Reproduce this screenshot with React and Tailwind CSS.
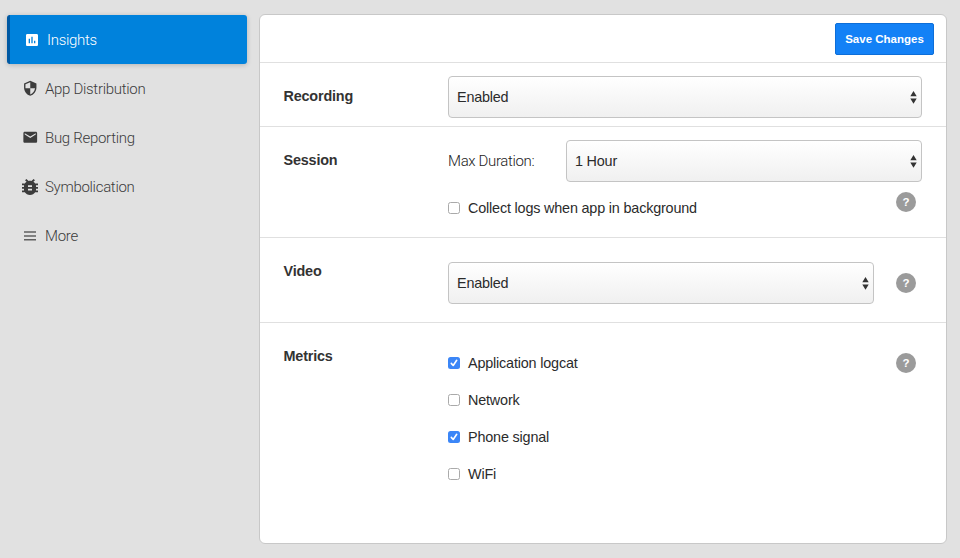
import React from "react";
import { MdInsertChart, MdSecurity, MdEmail } from "react-icons/md";

function BugIcon() {
  return (
    <svg width="16" height="16" viewBox="4 3 16 18" preserveAspectRatio="none" className="shrink-0 fill-current">
      <path d="M20 8h-2.81c-.45-.78-1.07-1.45-1.82-1.96L17 4.41 15.59 3l-2.17 2.17C12.96 5.06 12.49 5 12 5s-.96.06-1.41.17L8.41 3 7 4.41l1.62 1.63C7.88 6.55 7.26 7.22 6.81 8H4v2h2.09c-.05.33-.09.66-.09 1v1H4v2h2v1c0 .34.04.67.09 1H4v2h2.81c1.04 1.79 2.97 3 5.19 3s4.15-1.21 5.19-3H20v-2h-2.09c.05-.33.09-.66.09-1v-1h2v-2h-2v-1c0-.34-.04-.67-.09-1H20V8zm-6 8h-4v-2h4v2zm0-4h-4v-2h4v2z" />
    </svg>
  );
}

function MenuIcon() {
  return (
    <svg width="12" height="10" viewBox="0 0 12 10" className="shrink-0 fill-[#606060]">
      <path d="M0 .3h12v1.5H0zM0 4.2h12v1.5H0zM0 8.1h12v1.5H0z" />
    </svg>
  );
}

const navItems = [
  { label: "App Distribution", icon: <MdSecurity size={16.5} /> },
  { label: "Bug Reporting", icon: <MdEmail size={16.5} /> },
  { label: "Symbolication", icon: <BugIcon /> },
  { label: "More", icon: <MenuIcon /> },
];

function Select({ value, className }) {
  return (
    <div
      className={`flex h-[42px] items-center justify-between rounded-[4px] border border-[#c4c4c4] bg-linear-to-b from-white to-[#f0f0f0] pl-2 pr-1 text-[14.4px] tracking-[-0.2px] text-[#2b2b2b] ${className}`}
    >
      <span className="pt-0.5">{value}</span>
      <svg width="7" height="13" viewBox="0 0 7 13" className="fill-[#333]">
        <path d="M3.5 0 6.7 5.2H.3zM.3 7.6h6.4L3.5 12.8z" />
      </svg>
    </div>
  );
}

function Checkbox({ label, checked }) {
  return (
    <div className="flex h-[17px] items-center gap-2 text-[14.4px] tracking-[-0.18px] text-[#2b2b2b]">
      {checked ? (
        <span className="flex size-3 items-center justify-center rounded-[2.5px] bg-[#3b86f7]">
          <svg width="12" height="12" viewBox="0 0 12 12" fill="none" stroke="white" strokeWidth="1.6" strokeLinecap="round" strokeLinejoin="round">
            <path d="M3.3 6.4 5.2 8.5 8.7 3.3" />
          </svg>
        </span>
      ) : (
        <span className="size-3 rounded-[2.5px] border border-[#aaa] bg-white" />
      )}
      <span className="pt-0.5">{label}</span>
    </div>
  );
}

function Help({ className }) {
  return (
    <span className={`flex size-5 items-center justify-center rounded-full bg-[#9b9b9b] pt-px text-[11.5px] font-bold text-white ${className}`}>
      ?
    </span>
  );
}

function Row({ title, className, children }) {
  return (
    <section className={`flex border-t border-[#e0e0e0] pl-[23.5px] ${className}`}>
      <h2 className="w-[164.5px] shrink-0 pt-[25px] text-[14.4px] leading-[17px] font-bold tracking-[-0.18px] text-[#333]">
        {title}
      </h2>
      {children}
    </section>
  );
}

export default function App() {
  return (
    <div className="flex h-[558px] w-[960px] gap-3 bg-[#e1e1e1] pt-[14px] pl-[7px] font-['Liberation_Sans',Arial,sans-serif]">
      <nav className="flex w-60 flex-col pt-px font-['Roboto','Liberation_Sans',sans-serif] text-[15px] font-light tracking-[-0.3px]">
        <div className="flex h-[49px] items-center gap-[7px] rounded-[3px] border-l-3 border-[#0059a3] bg-[#0082dc] pl-[14px] text-white shadow-[0_1px_5px_rgba(0,0,0,0.2)]">
          <MdInsertChart size={16} />
          <span className="pt-0.5">Insights</span>
        </div>
        {navItems.map(({ label, icon }) => (
          <div key={label} className="flex h-[49px] items-center pl-[13px] text-[#3c3c3c]">
            <span className="flex w-5 justify-center">{icon}</span>
            <span className="pt-0.5 pl-[5px]">{label}</span>
          </div>
        ))}
      </nav>

      <main className="h-[530px] w-[688px] rounded-[6px] border border-[#c8c8c8] bg-white">
        <header className="flex h-[47px] justify-end pt-2 pr-3">
          <button className="h-8 w-[99px] rounded-[2px] border border-[#0d6ed8] bg-[#1381f6] pt-0.5 text-[11.5px] font-bold whitespace-nowrap text-white">
            Save Changes
          </button>
        </header>
        <Row title="Recording" className="h-16">
          <Select value="Enabled" className="mt-[13px] w-[474px]" />
        </Row>
        <Row title="Session" className="h-[111px]">
          <div className="w-[474px] pt-[13px]">
            <div className="flex items-center">
              <span className="w-[118px] font-['Roboto','Liberation_Sans',sans-serif] text-[15px] font-light tracking-[-0.35px] text-[#222]">
                Max Duration:
              </span>
              <Select value="1 Hour" className="w-[356px]" />
            </div>
            <div className="flex justify-between pt-[10px] pr-[6px]">
              <div className="pt-[7px]">
                <Checkbox label="Collect logs when app in background" />
              </div>
              <Help />
            </div>
          </div>
        </Row>
        <Row title="Video" className="h-[85px]">
          <Select value="Enabled" className="mt-6 w-[426px]" />
          <Help className="mt-[35px] ml-[22px]" />
        </Row>
        <Row title="Metrics">
          <div className="flex w-[448px] flex-col gap-5 pt-[31px]">
            <Checkbox label="Application logcat" checked />
            <Checkbox label="Network" />
            <Checkbox label="Phone signal" checked />
            <Checkbox label="WiFi" />
          </div>
          <Help className="mt-[30px]" />
        </Row>
      </main>
    </div>
  );
}
